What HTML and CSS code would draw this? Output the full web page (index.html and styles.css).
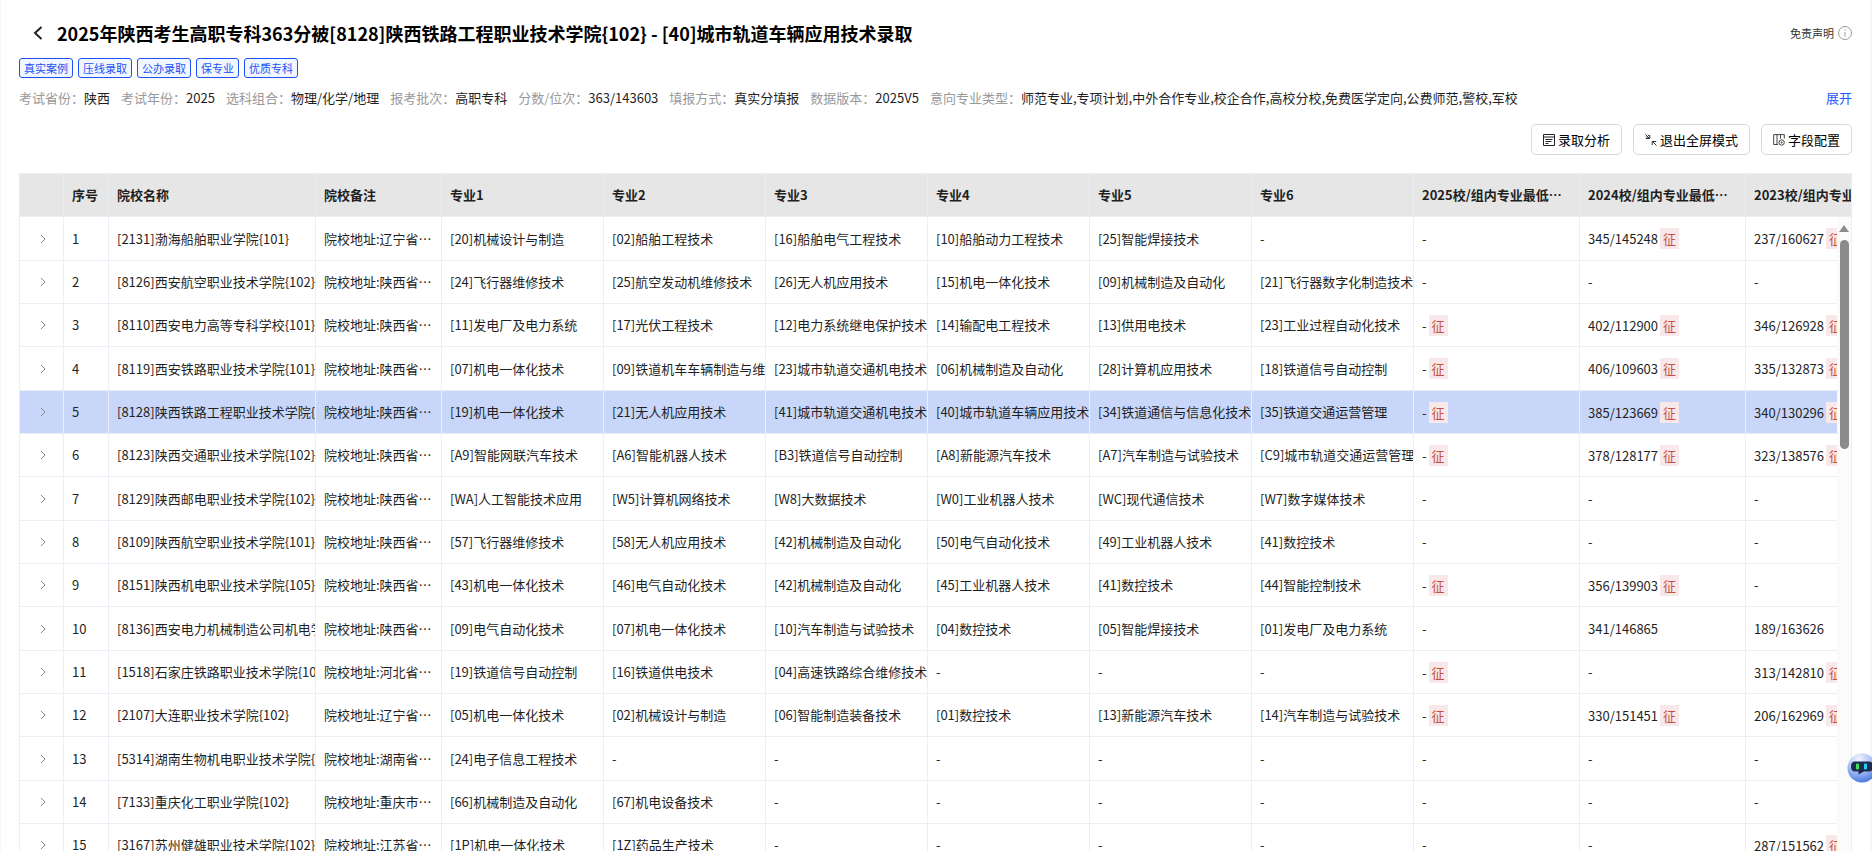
FILE: index.html
```html
<!DOCTYPE html>
<html lang="zh-CN">
<head>
	<meta charset="utf-8">
	<meta name="viewport" content="width=device-width, initial-scale=1">
	<title>志愿录取案例</title>
	<link rel="stylesheet" href="styles.css">
</head>
<body>

<main class="page">

	<header class="head">
		<button type="button" class="back" aria-label="返回">
			<svg width="10" height="14" viewBox="0 0 10 14"><path d="M8.5 1 2 7l6.5 6" fill="none" stroke="#222" stroke-width="2"/></svg>
		</button>
		<h1 class="title">2025年陕西考生高职专科363分被[8128]陕西铁路工程职业技术学院{102} - [40]城市轨道车辆应用技术录取</h1>
		<a href="#" class="notice">免责声明
			<svg width="14" height="14" viewBox="0 0 14 14"><circle cx="7" cy="7" r="6.500" fill="none" stroke="#999"/><path d="M7 6v4.500M7 3.500v1.200" stroke="#999"/></svg>
		</a>
	</header>

	<div class="tags">
		<span class="tag">真实案例</span>
		<span class="tag">压线录取</span>
		<span class="tag">公办录取</span>
		<span class="tag">保专业</span>
		<span class="tag">优质专科</span>
	</div>

	<div class="info">
		<dl class="info-list">
			<div class="info-item"><dt>考试省份：</dt><dd>陕西</dd></div>
			<div class="info-item"><dt>考试年份：</dt><dd>2025</dd></div>
			<div class="info-item"><dt>选科组合：</dt><dd>物理/化学/地理</dd></div>
			<div class="info-item"><dt>报考批次：</dt><dd>高职专科</dd></div>
			<div class="info-item"><dt>分数/位次：</dt><dd>363/143603</dd></div>
			<div class="info-item"><dt>填报方式：</dt><dd>真实分填报</dd></div>
			<div class="info-item"><dt>数据版本：</dt><dd>2025V5</dd></div>
			<div class="info-item"><dt>意向专业类型：</dt><dd>师范专业,专项计划,中外合作专业,校企合作,高校分校,免费医学定向,公费师范,警校,军校</dd></div>
		</dl>
		<a href="#" class="more">展开</a>
	</div>

	<div class="toolbar">
		<button type="button" class="btn">
			<svg width="12" height="12" viewBox="0 0 12 12" fill="none" stroke="#222"><path d="M.5.5h11v11H.5zM.5 3h11M2.5 5.5h7M2.5 7.5h6M2.5 9.5h3"/></svg>
			录取分析
		</button>
		<button type="button" class="btn">
			<svg width="12" height="12" viewBox="0 0 12 12" fill="none" stroke="#333"><path d="M.5.5l4 4M.8 4.500h4V.8M1 2.500l2 2M2.800.8l1.700 1.700M11.500 11.500l-4-4M11.200 7.500h-4v3.700M7.500 7.500"/></svg>
			退出全屏模式
		</button>
		<button type="button" class="btn">
			<svg width="12" height="12" viewBox="0 0 12 12" fill="none" stroke="#444"><path d="M5 10.5H.7V.6h10.6v4M4 .6v9.900M7.500.6v4"/><circle cx="8.600" cy="8.500" r="2.700"/><circle cx="8.600" cy="8.500" r=".6"/></svg>
			字段配置
		</button>
	</div>

	<div class="table-box">
		<table class="plan">
			<colgroup>
				<col class="c-open"><col class="c-no"><col class="c-school"><col class="c-note">
				<col class="c-major"><col class="c-major"><col class="c-major"><col class="c-major"><col class="c-major"><col class="c-major">
				<col class="c-score"><col class="c-score"><col class="c-score">
			</colgroup>
			<thead>
				<tr>
					<th></th>
					<th>序号</th>
					<th>院校名称</th>
					<th>院校备注</th>
					<th>专业1</th>
					<th>专业2</th>
					<th>专业3</th>
					<th>专业4</th>
					<th>专业5</th>
					<th>专业6</th>
					<th>2025校/组内专业最低…</th>
					<th>2024校/组内专业最低…</th>
					<th>2023校/组内专业最低…</th>
				</tr>
			</thead>
			<tbody id="rows"></tbody>
		</table>
		<div class="scroll"><span class="scroll-up"></span><span class="scroll-thumb"></span></div>
	</div>

</main>

<button type="button" class="robot" aria-label="智能助手">
	<svg width="30" height="30" viewBox="0 0 30 30">
		<defs>
			<radialGradient id="ball" cx=".4" cy=".2" r=".85">
				<stop offset="0" stop-color="#f2f5ff"/>
				<stop offset=".5" stop-color="#a9bff5"/>
				<stop offset="1" stop-color="#4272dc"/>
			</radialGradient>
		</defs>
		<circle cx="15" cy="15" r="14.5" fill="url(#ball)"/>
		<path d="M8 8.5h14q4 0 4 5t-4 5h-5l-5.500 3v-3H8q-4 0-4-5t4-5z" fill="#1d2b50"/>
		<rect x="9" y="10.500" width="3" height="6" rx="1" fill="#3fe05a"/>
		<rect x="17" y="10.500" width="3" height="6" rx="1" fill="#22d3ee"/>
	</svg>
</button>

<script>
	// name, note, six majors, then the lowest scores of 2025 / 2024 / 2023
	// a score that ends with * also gets the 征 mark
	const data=[
		['[2131]渤海船舶职业学院{101}','辽宁省','[20]机械设计与制造','[02]船舶工程技术','[16]船舶电气工程技术','[10]船舶动力工程技术','[25]智能焊接技术','-','-','345/145248*','237/160627*'],
		['[8126]西安航空职业技术学院{102}','陕西省','[24]飞行器维修技术','[25]航空发动机维修技术','[26]无人机应用技术','[15]机电一体化技术','[09]机械制造及自动化','[21]飞行器数字化制造技术','-','-','-'],
		['[8110]西安电力高等专科学校{101}','陕西省','[11]发电厂及电力系统','[17]光伏工程技术','[12]电力系统继电保护技术','[14]输配电工程技术','[13]供用电技术','[23]工业过程自动化技术','-*','402/112900*','346/126928*'],
		['[8119]西安铁路职业技术学院{101}','陕西省','[07]机电一体化技术','[09]铁道机车车辆制造与维护','[23]城市轨道交通机电技术','[06]机械制造及自动化','[28]计算机应用技术','[18]铁道信号自动控制','-*','406/109603*','335/132873*'],
		['[8128]陕西铁路工程职业技术学院{102}','陕西省','[19]机电一体化技术','[21]无人机应用技术','[41]城市轨道交通机电技术','[40]城市轨道车辆应用技术','[34]铁道通信与信息化技术','[35]铁道交通运营管理','-*','385/123669*','340/130296*'],
		['[8123]陕西交通职业技术学院{102}','陕西省','[A9]智能网联汽车技术','[A6]智能机器人技术','[B3]铁道信号自动控制','[A8]新能源汽车技术','[A7]汽车制造与试验技术','[C9]城市轨道交通运营管理','-*','378/128177*','323/138576*'],
		['[8129]陕西邮电职业技术学院{102}','陕西省','[WA]人工智能技术应用','[W5]计算机网络技术','[W8]大数据技术','[W0]工业机器人技术','[WC]现代通信技术','[W7]数字媒体技术','-','-','-'],
		['[8109]陕西航空职业技术学院{101}','陕西省','[57]飞行器维修技术','[58]无人机应用技术','[42]机械制造及自动化','[50]电气自动化技术','[49]工业机器人技术','[41]数控技术','-','-','-'],
		['[8151]陕西机电职业技术学院{105}','陕西省','[43]机电一体化技术','[46]电气自动化技术','[42]机械制造及自动化','[45]工业机器人技术','[41]数控技术','[44]智能控制技术','-*','356/139903*','-'],
		['[8136]西安电力机械制造公司机电学院','陕西省','[09]电气自动化技术','[07]机电一体化技术','[10]汽车制造与试验技术','[04]数控技术','[05]智能焊接技术','[01]发电厂及电力系统','-','341/146865','189/163626'],
		['[1518]石家庄铁路职业技术学院{102}','河北省','[19]铁道信号自动控制','[16]铁道供电技术','[04]高速铁路综合维修技术','-','-','-','-*','-','313/142810*'],
		['[2107]大连职业技术学院{102}','辽宁省','[05]机电一体化技术','[02]机械设计与制造','[06]智能制造装备技术','[01]数控技术','[13]新能源汽车技术','[14]汽车制造与试验技术','-*','330/151451*','206/162969*'],
		['[5314]湖南生物机电职业技术学院{102}','湖南省','[24]电子信息工程技术','-','-','-','-','-','-','-','-'],
		['[7133]重庆化工职业学院{102}','重庆市','[66]机械制造及自动化','[67]机电设备技术','-','-','-','-','-','-','-'],
		['[3167]苏州健雄职业技术学院{102}','江苏省','[1P]机电一体化技术','[1Z]药品生产技术','-','-','-','-','-','-','287/151562*']
	];

	const arrow='<button type="button" class="open" aria-label="展开行"><svg width="6" height="10" viewBox="0 0 6 10"><path d="M1 1l4 4-4 4" fill="none" stroke="#888"/></svg></button>';
	const current=5;

	document.querySelector('#rows').innerHTML=data.map((row,i)=>{
		const cells=row.map((text,n)=>{
			if(n==1){
				text='院校地址:'+text+'…';
			}
			return '<td>'+text.replace('*','<span class="mark">征</span>')+'</td>';
		});
		const cls=i+1==current ? ' class="current"' : '';
		return '<tr'+cls+'><td class="open-cell">'+arrow+'</td><td>'+(i+1)+'</td>'+cells.join('')+'</tr>';
	}).join('');
</script>
</body>
</html>
```
FILE: styles.css
```css
* {
	box-sizing: border-box;
}

body {
	margin: 0;
	background: #f3f6ff;
	color: #1f1f1f;
	font-family: "Noto Sans CJK SC", sans-serif;
	font-size: 13px;
	line-height: 20px;
	overflow: hidden;
}

button {
	padding: 0;
	border: 0;
	background: none;
	font: inherit;
	color: inherit;
	cursor: pointer;
}

a {
	text-decoration: none;
}

svg {
	display: block;
	flex: none;
}

.page {
	display: flex;
	flex-direction: column;
	height: 100vh;
	margin: 0 2px 0 1px;
	padding: 20px 18px 0;
	background: #fff;
}

/* title line */
.head {
	display: flex;
	align-items: center;
	height: 26px;
	margin-bottom: 12px;
}

.back {
	padding: 0 14px;
}

.title {
	flex: 1;
	margin: 0;
	color: #000;
	font-size: 18px;
	line-height: 26px;
	font-weight: bold;
	white-space: nowrap;
}

.notice {
	display: flex;
	align-items: center;
	gap: 4px;
	color: #333;
	font-size: 11px;
}

.tags {
	display: flex;
	gap: 5px;
	margin-bottom: 10px;
}

.tag {
	height: 20px;
	padding: 0 4px;
	border: 1px solid #1f50f5;
	border-radius: 3px;
	background: #f0f7ff;
	color: #1f50f5;
	font-size: 11px;
	line-height: 19px;
}

/* exam info */
.info {
	display: flex;
	justify-content: space-between;
	margin-bottom: 16px;
}

.info-list {
	display: flex;
	gap: 11px;
	margin: 0;
	white-space: nowrap;
}

.info-item {
	display: flex;
}

.info-item dt {
	color: #999;
}

.info-item dd {
	margin: 0;
}

.more {
	color: #2657ff;
}

.toolbar {
	display: flex;
	justify-content: flex-end;
	gap: 11px;
	margin-bottom: 18px;
}

.btn {
	display: flex;
	align-items: center;
	gap: 3px;
	height: 31px;
	padding: 0 11px;
	border: 1px solid #d9d9d9;
	border-radius: 5px;
	background: #fff;
	color: #000;
}

/* table */
.table-box {
	position: relative;
	flex: 1;
	min-height: 0;
	border: 1px solid #ebeef5;
	border-bottom: 0;
	overflow: hidden;
}

.plan {
	width: 1890px;
	table-layout: fixed;
	border-collapse: separate;
	border-spacing: 0;
}

.c-open { width: 44px; }
.c-no { width: 45px; }
.c-school { width: 207px; }
.c-note { width: 126px; }
.c-major { width: 162px; }
.c-score { width: 166px; }

.plan th,
.plan td {
	height: 43px;
	padding: 0 0 0 8px;
	border-right: 1px solid #ebeef5;
	border-bottom: 1px solid #ebeef5;
	text-align: left;
	white-space: nowrap;
	overflow: hidden;
}

.plan th {
	background: #e6e6e6;
	font-weight: bold;
}

.plan tbody tr:nth-child(3n+1) td {
	height: 44px;
}

.plan .current td {
	background: #c8d7f9;
}

.plan .open-cell {
	padding: 0 0 0 2px;
}

.open {
	display: flex;
	justify-content: center;
	width: 100%;
}

.mark {
	display: inline-block;
	margin-left: 2px;
	padding: 0 3px;
	background: #f8e8e9;
	color: #c4513f;
	line-height: 21px;
}

.scroll {
	position: absolute;
	top: 43px;
	right: 0;
	bottom: 0;
	display: flex;
	flex-direction: column;
	align-items: center;
	gap: 8px;
	width: 14px;
	padding-top: 8px;
	background: #fbfbfb;
}

.scroll-up {
	border: 5px solid transparent;
	border-top: 0;
	border-bottom: 7px solid #8b8b8b;
}

.scroll-thumb {
	width: 9px;
	height: 209px;
	border-radius: 5px;
	background: #8b8b8b;
}

.robot {
	position: fixed;
	right: -5px;
	bottom: 68px;
}
```
